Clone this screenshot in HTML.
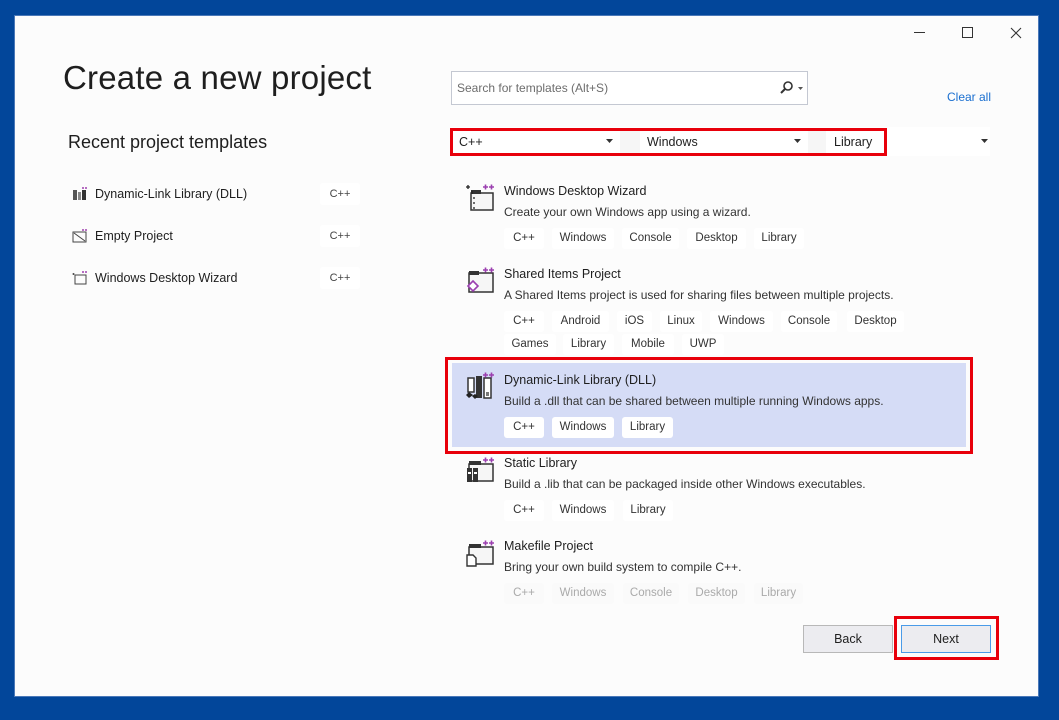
<!DOCTYPE html>
<html><head><meta charset="utf-8"><style>
*{margin:0;padding:0;box-sizing:border-box}
body{width:1059px;height:720px;background:#02469a;position:relative;overflow:hidden;font-family:"Liberation Sans",sans-serif;color:#1e1e1e}
.win{position:absolute;left:14px;top:15px;width:1025px;height:682px;background:#fcfcfc;border:1px solid #4a78b8}
.a{position:absolute;white-space:nowrap}
.tag{position:absolute;height:21px;background:#fff;border-radius:3px;font-size:11.5px;line-height:21px;text-align:center;color:#333}
.dim{color:#aaa;background:#fafafa}
.t{position:absolute;left:504px;font-size:12.5px;color:#1e1e1e}
.d{position:absolute;left:504px;font-size:12px;color:#333}
.rb{position:absolute;border:3px solid #e8000b}
.ic{position:absolute;left:465px;width:30px;height:30px}
.li{position:absolute;left:95px;font-size:12.5px}
.lc{position:absolute;left:320px;width:40px;height:22px;background:#fff;border-radius:3px;font-size:11px;line-height:22px;text-align:center;color:#444}
.btn{position:absolute;top:625px;height:28px;background:#ececf0;border:1px solid #b8b8b8;font-size:12.5px;line-height:26px;text-align:center}
</style></head><body>
<div class="win"></div>
<div class="a" style="left:914px;top:32px;width:11px;height:1px;background:#333"></div>
<div class="a" style="left:962px;top:27px;width:11px;height:11px;border:1px solid #333"></div>
<svg class="a" style="left:1010px;top:27px" width="12" height="12"><path d="M1 1L11 11M11 1L1 11" stroke="#333" stroke-width="1.1"/></svg>

<div class="a" style="left:63px;top:59px;font-size:33px;letter-spacing:0.2px;color:#1e1e1e">Create a new project</div>
<div class="a" style="left:68px;top:132px;font-size:18px;color:#1e1e1e">Recent project templates</div>

<svg class="a" style="left:72px;top:186px" width="16" height="16"><rect x="1" y="4" width="4" height="10" fill="#555"/><rect x="6" y="6" width="3" height="8" fill="#888"/><rect x="10" y="4" width="4" height="10" fill="#333"/><circle cx="11" cy="2" r="1" fill="#a040b0"/><circle cx="14" cy="2" r="1" fill="#a040b0"/></svg>
<div class="li" style="top:187px">Dynamic-Link Library (DLL)</div><div class="lc" style="top:183px">C++</div>
<svg class="a" style="left:72px;top:228px" width="16" height="16"><rect x="1" y="4" width="13" height="10" fill="none" stroke="#444"/><path d="M2 5L13 13" stroke="#444"/><circle cx="11" cy="2" r="1" fill="#a040b0"/><circle cx="14" cy="2" r="1" fill="#a040b0"/></svg>
<div class="li" style="top:229px">Empty Project</div><div class="lc" style="top:225px">C++</div>
<svg class="a" style="left:72px;top:270px" width="16" height="16"><rect x="3" y="5" width="11" height="9" fill="none" stroke="#444"/><circle cx="1.5" cy="4" r="1" fill="#444"/><circle cx="11" cy="2" r="1" fill="#a040b0"/><circle cx="14" cy="2" r="1" fill="#a040b0"/></svg>
<div class="li" style="top:271px">Windows Desktop Wizard</div><div class="lc" style="top:267px">C++</div>

<div class="a" style="left:451px;top:71px;width:357px;height:34px;background:#fff;border:1px solid #c4c8d2"></div>
<div class="a" style="left:457px;top:81px;font-size:12px;color:#6d6d6d">Search for templates (Alt+S)</div>
<svg class="a" style="left:779px;top:80px" width="26" height="16"><circle cx="9" cy="6" r="4" fill="none" stroke="#333" stroke-width="1.6"/><path d="M6 9L2 13" stroke="#333" stroke-width="2"/><path d="M19 7h5l-2.5 3z" fill="#555"/></svg>
<div class="a" style="left:947px;top:90px;font-size:12px;color:#1a6fd0">Clear all</div>

<div class="a" style="left:450px;top:127px;width:540px;height:29px;background:#fff"></div>
<div class="a" style="left:620px;top:130px;width:20px;height:23px;background:#f6f6f6"></div>
<div class="a" style="left:808px;top:130px;width:18px;height:23px;background:#f6f6f6"></div>
<div class="rb" style="left:450px;top:128px;width:437px;height:28px"></div>
<div class="a" style="left:459px;top:135px;font-size:12.5px">C++</div>
<div class="a" style="left:647px;top:135px;font-size:12.5px">Windows</div>
<div class="a" style="left:834px;top:135px;font-size:12.5px">Library</div>
<svg class="a" style="left:606px;top:139px" width="8" height="5"><path d="M0 0h7l-3.5 4z" fill="#333"/></svg>
<svg class="a" style="left:794px;top:139px" width="8" height="5"><path d="M0 0h7l-3.5 4z" fill="#333"/></svg>
<svg class="a" style="left:981px;top:139px" width="8" height="5"><path d="M0 0h7l-3.5 4z" fill="#333"/></svg>

<svg class="ic" style="top:182px" viewBox="0 0 30 30"><rect x="6" y="11" width="22" height="17" fill="#f6f6f6" stroke="#333" stroke-width="1.5"/><rect x="6" y="8" width="10" height="4" fill="#333"/><path d="M3 3v4M1 5h4M7 9v3M9 15v2M9 20v2M9 25v2" stroke="#222" stroke-width="1.3"/><path d="M18 5h5M20.5 2.5v5M24 5h5M26.5 2.5v5" stroke="#9b3fb0" stroke-width="1.6"/></svg>
<div class="t" style="top:184px">Windows Desktop Wizard</div>
<div class="d" style="top:205px">Create your own Windows app using a wizard.</div>
<div class="tag" style="top:228px;left:504px;width:40px">C++</div>
<div class="tag" style="top:228px;left:552px;width:62px">Windows</div>
<div class="tag" style="top:228px;left:622px;width:57px">Console</div>
<div class="tag" style="top:228px;left:687px;width:59px">Desktop</div>
<div class="tag" style="top:228px;left:754px;width:50px">Library</div>

<svg class="ic" style="top:265px" viewBox="0 0 30 30"><rect x="4" y="8" width="24" height="19" fill="#f6f6f6" stroke="#333" stroke-width="1.5"/><rect x="4" y="6" width="10" height="4" fill="#333"/><path d="M8 16l5 5-5 5-5-5z" fill="#fff" stroke="#9b3fb0" stroke-width="1.6"/><path d="M18 5h5M20.5 2.5v5M24 5h5M26.5 2.5v5" stroke="#9b3fb0" stroke-width="1.6"/></svg>
<div class="t" style="top:267px">Shared Items Project</div>
<div class="d" style="top:288px">A Shared Items project is used for sharing files between multiple projects.</div>
<div class="tag" style="top:311px;left:504px;width:40px">C++</div>
<div class="tag" style="top:311px;left:552px;width:57px">Android</div>
<div class="tag" style="top:311px;left:617px;width:35px">iOS</div>
<div class="tag" style="top:311px;left:660px;width:42px">Linux</div>
<div class="tag" style="top:311px;left:710px;width:63px">Windows</div>
<div class="tag" style="top:311px;left:781px;width:56px">Console</div>
<div class="tag" style="top:311px;left:847px;width:57px">Desktop</div>
<div class="tag" style="top:334px;left:504px;width:52px">Games</div>
<div class="tag" style="top:334px;left:563px;width:51px">Library</div>
<div class="tag" style="top:334px;left:622px;width:52px">Mobile</div>
<div class="tag" style="top:334px;left:682px;width:42px">UWP</div>

<div class="a" style="left:452px;top:363px;width:514px;height:84px;background:#d5dcf6"></div>
<div class="rb" style="left:445px;top:357px;width:528px;height:97px"></div>
<svg class="ic" style="top:370px" viewBox="0 0 30 30"><rect x="3" y="8" width="6" height="14" fill="#fff" stroke="#333" stroke-width="1.5"/><rect x="11" y="6" width="6" height="22" fill="#333"/><rect x="19" y="8" width="7" height="20" fill="#fff" stroke="#333" stroke-width="1.5"/><rect x="21" y="22" width="3" height="4" fill="#777"/><path d="M4 22l4 3-4 3-3-3zM10 24l3 2-3 3-3-3z" fill="#222"/><path d="M18 5h5M20.5 2.5v5M24 5h5M26.5 2.5v5" stroke="#9b3fb0" stroke-width="1.6"/></svg>
<div class="t" style="top:373px">Dynamic-Link Library (DLL)</div>
<div class="d" style="top:394px">Build a .dll that can be shared between multiple running Windows apps.</div>
<div class="tag" style="top:417px;left:504px;width:40px">C++</div>
<div class="tag" style="top:417px;left:552px;width:62px">Windows</div>
<div class="tag" style="top:417px;left:622px;width:51px">Library</div>

<svg class="ic" style="top:455px" viewBox="0 0 30 30"><rect x="4" y="9" width="24" height="17" fill="#f6f6f6" stroke="#333" stroke-width="1.5"/><rect x="4" y="6" width="12" height="4" fill="#333"/><rect x="2" y="13" width="5" height="14" fill="#333"/><rect x="8" y="13" width="5" height="14" fill="#333"/><rect x="3" y="17" width="3" height="2" fill="#fff"/><rect x="9" y="17" width="3" height="2" fill="#fff"/><path d="M18 5h5M20.5 2.5v5M24 5h5M26.5 2.5v5" stroke="#9b3fb0" stroke-width="1.6"/></svg>
<div class="t" style="top:456px">Static Library</div>
<div class="d" style="top:477px">Build a .lib that can be packaged inside other Windows executables.</div>
<div class="tag" style="top:500px;left:504px;width:40px">C++</div>
<div class="tag" style="top:500px;left:552px;width:62px">Windows</div>
<div class="tag" style="top:500px;left:623px;width:50px">Library</div>

<svg class="ic" style="top:538px" viewBox="0 0 30 30"><rect x="4" y="9" width="24" height="17" fill="#f6f6f6" stroke="#333" stroke-width="1.5"/><rect x="4" y="6" width="12" height="4" fill="#333"/><path d="M2 17h6l3 3v8H2z" fill="#fff" stroke="#333" stroke-width="1.4"/><path d="M18 5h5M20.5 2.5v5M24 5h5M26.5 2.5v5" stroke="#9b3fb0" stroke-width="1.6"/></svg>
<div class="t" style="top:539px">Makefile Project</div>
<div class="d" style="top:560px">Bring your own build system to compile C++.</div>
<div class="tag dim" style="top:583px;left:504px;width:40px">C++</div>
<div class="tag dim" style="top:583px;left:552px;width:62px">Windows</div>
<div class="tag dim" style="top:583px;left:623px;width:56px">Console</div>
<div class="tag dim" style="top:583px;left:688px;width:57px">Desktop</div>
<div class="tag dim" style="top:583px;left:754px;width:49px">Library</div>

<div class="btn" style="left:803px;width:90px">Back</div>
<div class="btn" style="left:901px;width:90px;border-color:#4a9be8">Next</div>
<div class="rb" style="left:894px;top:616px;width:105px;height:44px"></div>
</body></html>
